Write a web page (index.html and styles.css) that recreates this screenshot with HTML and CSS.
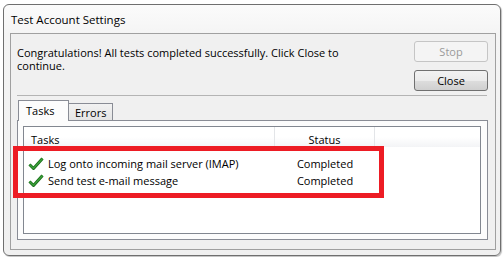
FILE: index.html
```html
<!DOCTYPE html>
<html lang="en">
<head>
  <meta charset="UTF-8" />
  <title>Test Account Settings</title>
  <link rel="stylesheet" href="styles.css">
</head>
<body>

<!-- dialog window -->
<div class="window">
  <div class="title">Test Account Settings</div>

  <div class="panel">
    <div class="top-row">
      <p class="message">Congratulations! All tests completed successfully. Click Close to continue.</p>
      <div class="buttons">
        <button class="btn" disabled>Stop</button>
        <button class="btn">Close</button>
      </div>
    </div>
    <div class="sep"></div>

    <!-- tabs -->
    <div class="tabs">
      <div class="tab selected">Tasks</div>
      <div class="tab">Errors</div>
    </div>
    <div class="tab-page">
      <div class="listbox">
        <div class="list-head">
          <div class="col-task">Tasks</div>
          <div class="col-status">Status</div>
          <div class="col-rest"></div>
        </div>
        <div class="row">
          <div class="col-task">
            <svg class="check" width="16" height="14" viewBox="0 0 16 14"><path d="M1.5 7.5 L5.5 11.5 L14.5 1.5" fill="none" stroke="#1b6e1b" stroke-width="3" stroke-linejoin="round"/><path d="M1.5 7.5 L5.5 11.5 L14.5 1.5" fill="none" stroke="#3ca33c" stroke-width="1.2"/></svg>
            Log onto incoming mail server (IMAP)
          </div>
          <div class="col-status">Completed</div>
        </div>
        <div class="row">
          <div class="col-task">
            <svg class="check" width="16" height="14" viewBox="0 0 16 14"><path d="M1.5 7.5 L5.5 11.5 L14.5 1.5" fill="none" stroke="#1b6e1b" stroke-width="3" stroke-linejoin="round"/><path d="M1.5 7.5 L5.5 11.5 L14.5 1.5" fill="none" stroke="#3ca33c" stroke-width="1.2"/></svg>
            Send test e-mail message
          </div>
          <div class="col-status">Completed</div>
        </div>
      </div>
    </div>
  </div>
</div>

<!-- red highlight annotation -->
<div class="highlight"></div>

</body>
</html>
```

FILE: styles.css
```css
* { box-sizing: border-box; }
body {
  margin: 0;
  background: #ffffff;
  font-family: 'Open Sans', 'Noto Sans', sans-serif;
  font-size: 11px;
  color: #000;
  position: relative;
  height: 257px;
  overflow: hidden;
}
.window {
  margin: 4px 2px 0 3px;
  height: 252px;
  border: 1px solid #6f6f6f;
  border-radius: 6px;
  background: linear-gradient(#fbfbfb, #f4f4f4 30px, #f0f0f0);
  box-shadow: 1px 1px 1px rgba(0, 0, 0, 0.25);
  padding: 0 4px 5px 6px;
  display: flex;
  flex-direction: column;
}
.title {
  height: 28px;
  line-height: 29px;
  padding-left: 1px;
  font-size: 11.5px;
  color: #000;
}
.panel {
  flex: 1;
  border: 1px solid #a0a0a0;
  background: #f0f0f0;
  display: flex;
  flex-direction: column;
}
.top-row {
  display: flex;
  padding: 7px 7px 0 6px;
}
.message {
  flex: 1;
  margin: 5px 0 0;
  line-height: 13px;
  padding-right: 62px;
}
.buttons {
  display: flex;
  flex-direction: column;
  gap: 8px;
}
.btn {
  width: 74px;
  height: 21px;
  padding: 0;
  font: inherit;
  color: #000;
  border: 1px solid #707070;
  border-radius: 3px;
  background: linear-gradient(#f2f2f2, #ebebeb 50%, #dddddd 51%, #cfcfcf);
}
.btn:disabled {
  color: #9a9a9a;
  border-color: #c5c5c5;
  background: #f4f4f4;
}
.sep {
  margin: 4px 8px 0 6px;
  border-top: 1px solid #b4b4b4;
}
.tabs {
  display: flex;
  align-items: flex-end;
  margin: 4px 0 0 7px;
  height: 20px;
  position: relative;
  z-index: 1;
}
.tab {
  height: 17px;
  padding: 0 6px;
  line-height: 17px;
  border: 1px solid #898c95;
  border-bottom: none;
  border-left: none;
  background: linear-gradient(#f2f2f2, #e4e4e4);
}
.tab.selected {
  width: 51px;
  height: 21px;
  margin-bottom: -1px;
  padding: 0 0 0 7px;
  line-height: 20px;
  border-left: 1px solid #898c95;
  background: #fcfcfc;
}
.tab-page {
  flex: 1;
  margin: 0 7px 9px 6px;
  border: 1px solid #898c95;
  background: #fcfcfc;
  padding: 5px 6px 5px 5px;
  display: flex;
}
.listbox {
  flex: 1;
  border: 1px solid #828790;
  background: #ffffff;
}
.list-head {
  display: flex;
  height: 20px;
  line-height: 25px;
  background: linear-gradient(#ffffff, #ffffff 50%, #f3f4f6);
}
.list-head .col-task {
  padding-left: 7px;
  border-right: 1px solid #e3e5e8;
}
.list-head .col-status {
  border-right: 1px solid #e3e5e8;
}
.col-task {
  width: 251px;
}
.col-status {
  width: 100px;
  text-align: center;
}
.col-rest {
  flex: 1;
}
.list-head + .row {
  margin-top: 8px;
}
.row {
  display: flex;
  height: 17px;
  line-height: 17px;
}
.row .col-task {
  padding-left: 4px;
  display: flex;
  align-items: center;
  gap: 4px;
}
.check {
  flex: none;
}
.highlight {
  position: absolute;
  left: 13px;
  top: 146px;
  width: 371px;
  height: 52px;
  border: 5px solid #ed1c24;
}
```
